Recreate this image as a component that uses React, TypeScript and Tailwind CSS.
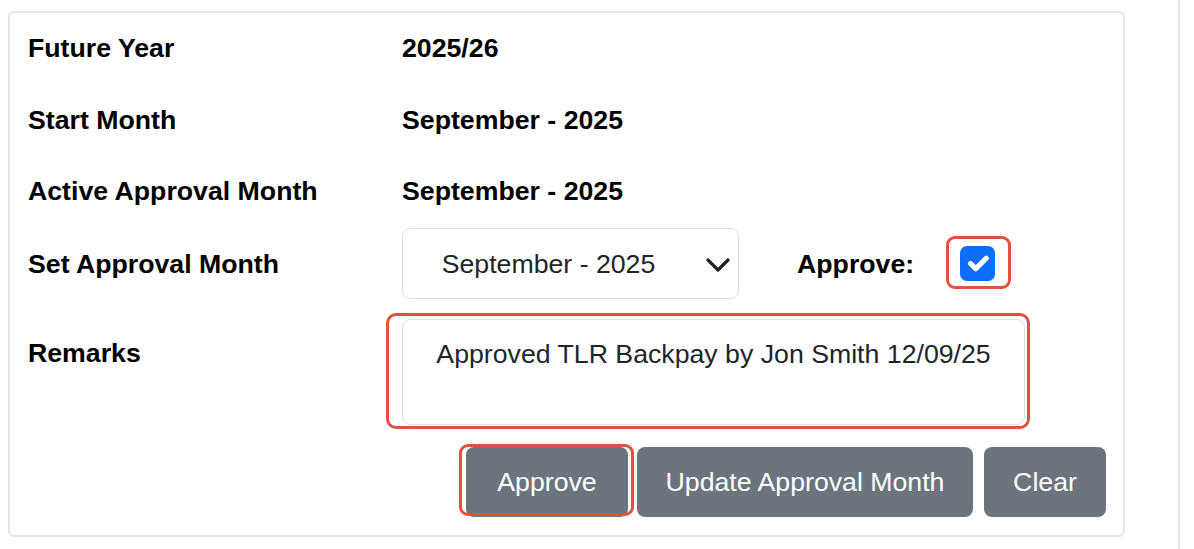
import { useState } from 'react'

const font = { fontFamily: '"Liberation Sans", Arial, sans-serif' }

function InfoRow({ label, value, className }: { label: string; value: string; className?: string }) {
  return (
    <div className={`flex items-center h-[40px] ${className ?? ''}`}>
      <div className="w-[374px] font-bold text-black">{label}</div>
      <div className="font-bold text-black">{value}</div>
    </div>
  )
}

export default function App() {
  const [approved, setApproved] = useState(true)
  const [remarks, setRemarks] = useState('Approved TLR Backpay by Jon Smith 12/09/25')

  return (
    <div className="w-[1194px] h-[549px] bg-white overflow-hidden" style={font}>
      <div className="w-[1180px] h-[549px] border-r-2 border-[#e8e8e8] pl-[8px] pt-[11px]">
        <div className="w-[1117px] h-[526px] border-2 border-[#e6e6e6] rounded-[6px] pl-[18px] pr-[17px] pt-[15px] text-[26.7px] leading-[40px] text-[#212529]">
          <InfoRow label="Future Year" value="2025/26" />
          <InfoRow label="Start Month" value="September - 2025" className="mt-[32px]" />
          <InfoRow label="Active Approval Month" value="September - 2025" className="mt-[31px]" />

          <div className="flex items-center mt-[17px] h-[71px]">
            <div className="w-[374px] font-bold text-black">Set Approval Month</div>
            <div className="relative w-[337px] h-[71px] border border-[#dee2e6] rounded-[8px] bg-white flex items-center justify-center pl-[20px] pr-[64px] text-[#212529]">
              <span>September - 2025</span>
              <svg className="absolute right-[8px] top-[29px] w-[24px] h-[14px]" viewBox="0 0 24 14" fill="none">
                <path d="M2 2l10 10 10-10" stroke="#222" strokeWidth={3.2} strokeLinecap="round" strokeLinejoin="round" />
              </svg>
            </div>
            <div className="ml-[58px] font-bold text-black">Approve:</div>
            <div className="relative ml-[46px] w-[35px] h-[35px]">
              <button
                type="button"
                onClick={() => setApproved(!approved)}
                className={`w-[35px] h-[35px] rounded-[7px] flex items-center justify-center ${approved ? 'bg-[#0d6efd]' : 'bg-white border border-[#dee2e6]'}`}
              >
                {approved && (
                  <svg className="w-[35px] h-[35px]" viewBox="0 0 20 20" fill="none">
                    <path d="m6 10 3 3 6-6" stroke="#fff" strokeWidth={3} strokeLinecap="round" strokeLinejoin="round" />
                  </svg>
                )}
              </button>
              <div className="absolute -left-[14px] -top-[10px] w-[65px] h-[53px] border-[3px] border-[#e0523f] rounded-[9px] pointer-events-none" />
            </div>
          </div>

          <div className="flex items-start mt-[20px]">
            <div className="w-[374px] mt-[14px] font-bold text-black">Remarks</div>
            <div className="relative">
              <textarea
                value={remarks}
                onChange={e => setRemarks(e.target.value)}
                className="block w-[623px] h-[106px] border border-[#dee2e6] rounded-[8px] pt-[14px] px-[20px] text-center resize-none outline-none text-[#212529] leading-[40px]"
                style={font}
              />
              <div className="absolute -left-[16px] -top-[6px] w-[644px] h-[116px] border-[3px] border-[#e0523f] rounded-[10px] pointer-events-none" />
            </div>
          </div>

          <div className="flex justify-end mt-[22px] text-white">
            <div className="relative">
              <button type="button" className="w-[162px] h-[70px] rounded-[8px] bg-[#6c757d]">Approve</button>
              <div className="absolute -left-[7px] -top-[3px] w-[175px] h-[72px] border-[3px] border-[#e0523f] rounded-[9px] pointer-events-none" />
            </div>
            <button type="button" className="ml-[9px] w-[336px] h-[70px] rounded-[8px] bg-[#6c757d]">Update Approval Month</button>
            <button type="button" className="ml-[11px] w-[122px] h-[70px] rounded-[8px] bg-[#6c757d]">Clear</button>
          </div>
        </div>
      </div>
    </div>
  )
}
